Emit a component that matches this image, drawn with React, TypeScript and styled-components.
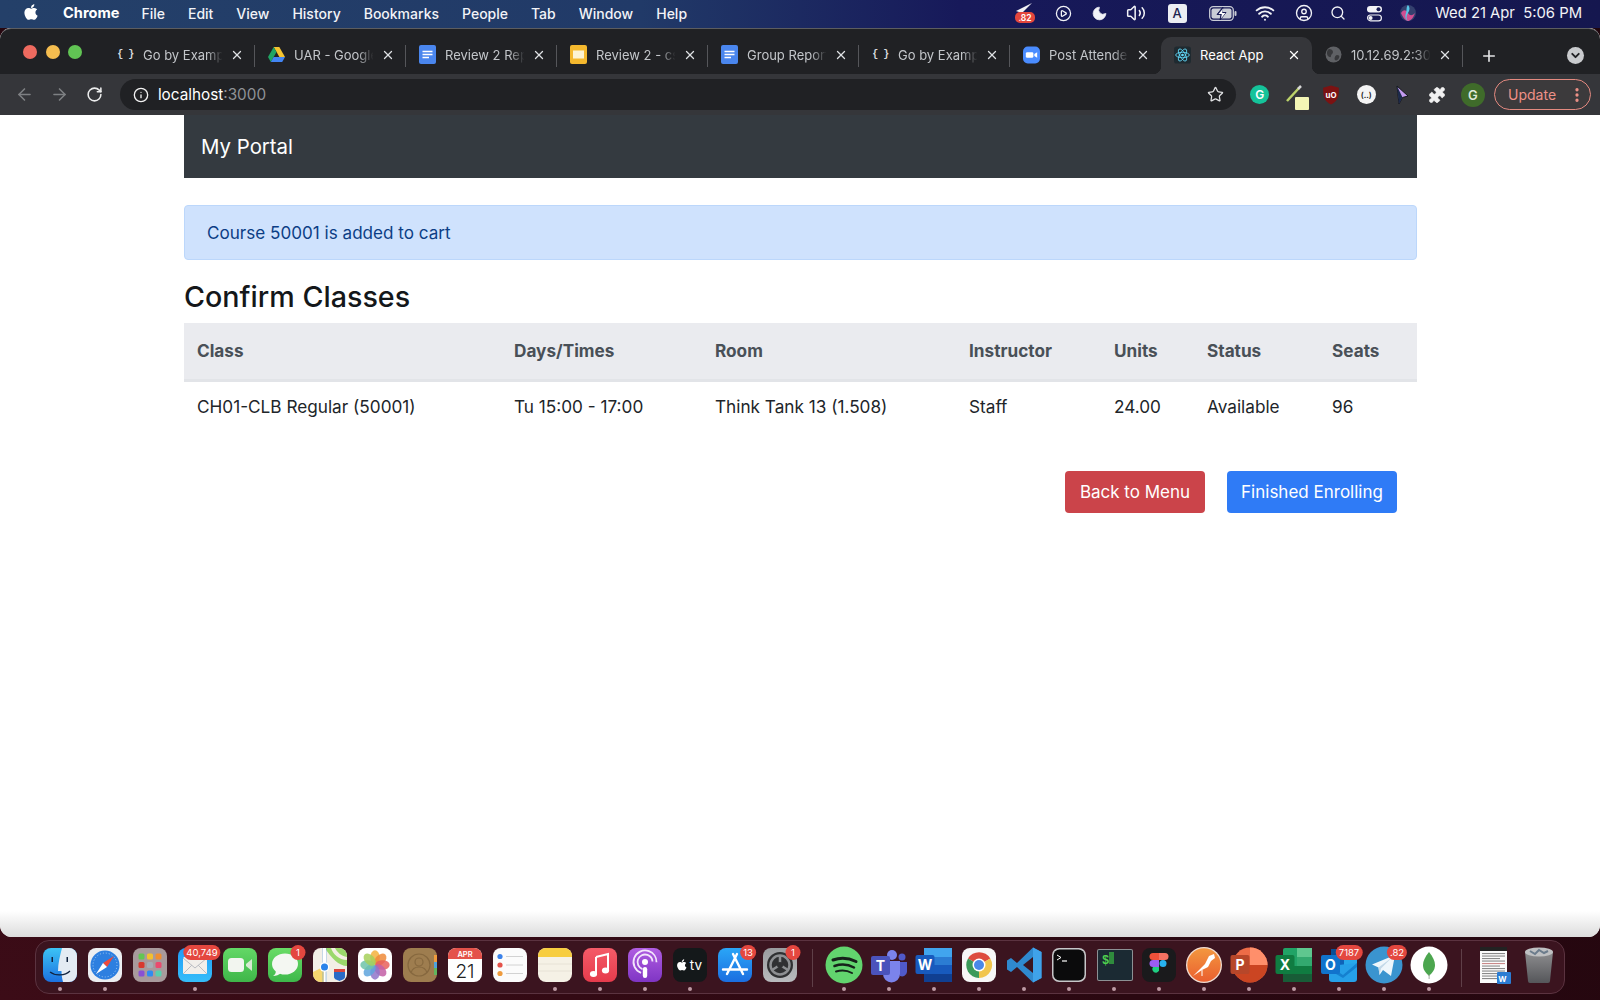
import React from "react";
import styled, { createGlobalStyle } from "styled-components";
import { FaApple } from "react-icons/fa";
import {
  ArrowLeft, ArrowRight, RotateCw, Info, Star, X, Plus, Puzzle, EllipsisVertical,
  CirclePlay, Moon, Volume2, Wifi, CircleUser, Search, ChevronDown,
} from "lucide-react";

const Global = createGlobalStyle`
  html, body { margin: 0; padding: 0; background: #2a0a12; }
  body { font-family: Inter, "Liberation Sans", sans-serif; }
  * { box-sizing: border-box; }
`;

const Desktop = styled.div`
  width: 1600px; height: 1000px; overflow: hidden; display: flex; flex-direction: column;
  background: radial-gradient(ellipse at 0% 100%, #3c0c17 0%, #2a0811 50%, #1f060d 100%);
`;

/* ---------- menu bar ---------- */
const MenuBar = styled.header`
  height: 28px; flex: none; display: flex; align-items: center; justify-content: space-between;
  padding: 0 18px 2px 22px; color: #f2f3f7; font-size: 14px; font-weight: 500;
  background: linear-gradient(90deg, #244069 0%, #213a68 40%, #17195a 60%, #15174f 100%);
`;
const MenuLeft = styled.nav`display: flex; align-items: center; gap: 23px;`;
const AppleSlot = styled.span`display: flex; width: 18px; font-size: 18px; color: #fff; margin-bottom: 3px;`;
const AppName = styled.span`font-weight: 700; color: #fff; margin-right: -1px; font-size: 14.6px;`;
const MenuItem = styled.span`white-space: nowrap;`;
const StatusRow = styled.div`display: flex; align-items: center;`;
const StatusSlot = styled.span<{ $w: number }>`
  width: ${(p) => p.$w}px; display: flex; justify-content: center; align-items: center; color: #f2f3f7;
`;
const Clock = styled.span`margin-left: 17px; white-space: pre; font-size: 14.8px; font-weight: 400;`;
const KeyBox = styled.span`
  width: 19px; height: 19px; background: #eceef3; color: #1c2450; border-radius: 3px;
  display: flex; align-items: center; justify-content: center; font-size: 13px; font-weight: 500;
`;

/* ---------- browser window ---------- */
const BrowserWindow = styled.main`
  height: 909px; flex: none; display: flex; flex-direction: column; overflow: hidden;
  border-radius: 11px 11px 12px 12px; background: #fff;
`;
const TabStrip = styled.div`
  height: 46px; flex: none; background: #202124; display: flex; align-items: flex-end; position: relative;
  border-top: 1px solid #5c5d60; border-radius: 11px 11px 0 0;
`;
const Lights = styled.div`
  width: 104px; height: 100%; flex: none; display: flex; gap: 8.5px; padding: 16px 0 0 23px;
`;
const Light = styled.span<{ $c: string }>`
  width: 14px; height: 14px; border-radius: 50%; background: ${(p) => p.$c};
`;
const Tab = styled.div<{ $active?: boolean; $sep?: boolean }>`
  width: 151px; height: 37px; flex: none; display: flex; align-items: center; position: relative;
  padding: 0 10px 2px 13px; font-size: 13px;
  color: ${(p) => (p.$active ? "#fff" : "#c3c6ca")};
  background: ${(p) => (p.$active ? "#35363a" : "transparent")};
  border-radius: 10px 10px 0 0;
  ${(p) =>
    p.$sep
      ? `&::after { content: ""; position: absolute; right: 0; top: 8px; height: 22px; width: 1px; background: #55565a; }`
      : ""}
  ${(p) =>
    p.$active
      ? `&::before { content: ""; position: absolute; left: -8px; bottom: 0; width: 8px; height: 8px; background: radial-gradient(circle at 0 0, transparent 8px, #35363a 8.5px); }
         &::after { content: ""; position: absolute; right: -8px; bottom: 0; width: 8px; height: 8px; background: radial-gradient(circle at 100% 0, transparent 8px, #35363a 8.5px); }`
      : ""}
`;
const FavSlot = styled.span`width: 17px; height: 17px; flex: none; display: flex; align-items: center; justify-content: center; margin-right: 9px;`;
const BraceIcon = styled.span`font-family: "Liberation Mono", monospace; font-size: 10px; font-weight: 700; color: #d8dadd; white-space: pre; letter-spacing: -0.5px;`;
const TabTitle = styled.span<{ $active?: boolean }>`
  flex: 1; min-width: 0; overflow: hidden; white-space: nowrap;
  ${(p) => (p.$active ? "" : `-webkit-mask-image: linear-gradient(90deg, #000 78%, transparent 97%); mask-image: linear-gradient(90deg, #000 78%, transparent 97%);`)}
`;
const TabClose = styled.span<{ $active?: boolean }>`
  display: flex; flex: none; width: 16px; justify-content: center; color: ${(p) => (p.$active ? "#fff" : "#dfe1e4")}; margin-left: 4px;
`;
const NewTab = styled.span`
  width: 52px; height: 37px; flex: none; display: flex; align-items: center; justify-content: center; color: #e2e3e5;
`;
const TabMenu = styled.span`
  position: absolute; right: 16px; bottom: 10px; width: 17px; height: 17px; border-radius: 50%;
  background: #c9cbce; display: flex; align-items: center; justify-content: center; color: #202124;
`;
const Toolbar = styled.div`
  height: 41px; flex: none; background: #35363a; display: flex; align-items: center; padding: 0 9px 0 15px;
`;
const NavButton = styled.span<{ $dim?: boolean }>`
  width: 35.5px; display: flex; justify-content: flex-start; color: ${(p) => (p.$dim ? "#7e8083" : "#eceded")};
`;
const Omnibox = styled.div`
  width: 1117px; height: 31px; margin-left: -1.5px; border-radius: 16px; background: #202124; display: flex; align-items: center;
  padding: 0 12px 0 13px; font-size: 15.3px; color: #fff;
`;
const InfoSlot = styled.span`display: flex; color: #f1f1f1; margin-right: 9px;`;
const Port = styled.span`color: #8f9296;`;
const OmniSpacer = styled.span`flex: 1;`;
const StarSlot = styled.span`display: flex; color: #dfe0e2;`;
const ExtRow = styled.div`display: flex; align-items: center; margin-left: 6px;`;
const ExtSlot = styled.span`width: 35.5px; height: 31px; display: flex; align-items: center; justify-content: center; color: #f1f1f1; position: relative;`;
const ExtCircle = styled.span<{ $bg: string; $fg: string; $size?: number; $font?: number }>`
  width: ${(p) => p.$size ?? 19}px; height: ${(p) => p.$size ?? 19}px; border-radius: 50%;
  background: ${(p) => p.$bg}; color: ${(p) => p.$fg};
  display: flex; align-items: center; justify-content: center; font-size: ${(p) => p.$font ?? 12}px; font-weight: 600;
`;
const Note = styled.span`
  position: absolute; left: 17px; bottom: 0; width: 14px; height: 13px; background: #f3f5b5; border-radius: 1px;
`;
const UpdatePill = styled.span`
  width: 97px; height: 31px; margin-left: 3.5px; border-radius: 16px; border: 1.5px solid #e48a80; background: #3c3a3c; color: #ee9187;
  display: flex; align-items: center; justify-content: space-between; padding: 0 4px 0 13px; font-size: 14px;
`;
const UpdateDots = styled.span`display: flex;`;

/* ---------- page ---------- */
const Page = styled.section`
  flex: 1; min-height: 0; background: linear-gradient(180deg, #fff 0, #fff calc(100% - 26px), #dcdcdc 100%);
  padding: 0 183px 0 184px;
`;
const Navbar = styled.div`
  height: 63px; background: #343a40; color: #fff; display: flex; align-items: center; padding-left: 17px; font-size: 20.4px;
`;
const Alert = styled.div`
  margin-top: 27px; height: 55px; background: #cfe2fd; border: 1px solid #bcd7fb; border-radius: 4px;
  display: flex; align-items: center; padding-left: 22px; color: #0c3e85; font-size: 17.1px;
`;
const Heading = styled.h2`
  margin: 17px 0 6px; font-size: 28.7px; line-height: 40px; font-weight: 500; color: #14171a;
`;
const ClassTable = styled.table`
  width: 1233px; table-layout: fixed; border-collapse: collapse; font-size: 17.2px; color: #212529;
`;
const Col = styled.col<{ $w: number }>`width: ${(p) => p.$w}px;`;
const HeadCell = styled.th`
  height: 57px; padding: 0 13px; text-align: left; font-weight: 700; color: #495057; background: #eaebef;
  border-bottom: 3px solid #e2e4e8;
`;
const BodyCell = styled.td`height: 56px; padding: 0 13px 4px;`;
const Actions = styled.div`
  margin-top: 35px; padding-right: 20px; display: flex; justify-content: flex-end; gap: 22px;
`;
const Btn = styled.button<{ $bg: string; $w: number }>`
  width: ${(p) => p.$w}px; height: 42px; border: 0; border-radius: 4px; background: ${(p) => p.$bg}; color: #fff;
  font: 400 17px Inter, "Liberation Sans", sans-serif; padding: 0;
`;

/* ---------- dock ---------- */
const DockArea = styled.footer`flex: 1; padding: 3px 35px 6px 35px;`;
const Dock = styled.nav`
  height: 54px; display: flex; padding: 0 2px 0 1.5px; border: 1px solid #5b3340; border-radius: 14px; background: #3b141f;
  align-items: flex-start;
`;
const DockItem = styled.div`
  width: 45px; height: 52px; flex: none; display: flex; flex-direction: column; align-items: center; padding-top: 5px; position: relative;
`;
const DockDot = styled.span<{ $on: boolean }>`
  width: 4px; height: 4px; border-radius: 50%; margin-top: 3px; background: ${(p) => (p.$on ? "#bd9aa4" : "transparent")};
`;
const DockSep = styled.span<{ $r: number }>`
  width: 1px; height: 38px; margin: 8px ${(p) => p.$r}px 0 9px; flex: none; background: #5f3f48;
`;
const Badge = styled.span<{ $dx: number }>`
  position: absolute; top: 4px; left: calc(50% + ${(p) => p.$dx}px); transform: translateX(-50%);
  min-width: 15px; height: 15px; padding: 0 3px; border-radius: 8px; background: #e4473f; color: #fff;
  font-size: 9.5px; line-height: 15px; text-align: center; white-space: nowrap;
`;

const Ic = ({ children }: { children: React.ReactNode }) => (
  <svg width="38" height="38" viewBox="0 0 38 38">{children}</svg>
);
const Grad = ({ id, a, b }: { id: string; a: string; b: string }) => (
  <defs>
    <linearGradient id={id} x1="0" y1="0" x2="0" y2="1">
      <stop offset="0" stopColor={a} />
      <stop offset="1" stopColor={b} />
    </linearGradient>
  </defs>
);
const Tile = ({ fill }: { fill: string }) => <rect x="2" y="2" width="34" height="34" rx="8" fill={fill} />;

const petals = ["#f3b23c", "#ef8b3a", "#e8605c", "#c35fa6", "#8f74c9", "#5fa5dd", "#6dc3a8", "#a6d05a"];

const icons: Record<string, React.ReactNode> = {
  finder: (
    <Ic>
      <Grad id="fa" a="#3cc3f5" b="#1c71e0" />
      <Tile fill="url(#fa)" />
      <path d="M21 2h7a8 8 0 0 1 8 8v18a8 8 0 0 1-8 8h-6c-1-4-1.500-7-1.500-11H17c0-8 2-15 4-23z" fill="#e4ebf3" />
      <path d="M9 26c5 4 15 4 20-1" stroke="#12233f" strokeWidth="1.200" fill="none" />
      <rect x="10.500" y="11" width="1.500" height="5" fill="#12233f" />
      <rect x="25.500" y="11" width="1.500" height="5" fill="#12233f" />
    </Ic>
  ),
  safari: (
    <Ic>
      <Tile fill="#eceef1" />
      <circle cx="19" cy="19" r="14.500" fill="#2d7fe0" />
      <circle cx="19" cy="19" r="12" fill="none" stroke="#a5cdf5" strokeWidth="1" strokeDasharray="1 2" />
      <path d="M28 10 17 17l4 4z" fill="#ee4a3d" />
      <path d="M10 28l7-11 4 4z" fill="#fff" />
    </Ic>
  ),
  launchpad: (
    <Ic>
      <Tile fill="#a89a9c" />
      {["#62c554", "#f3c02f", "#ef8e32", "#d8382e", "#a5adb5", "#ea4a6e", "#8950d4", "#2f8cf0", "#58cfae"].map((c, i) => (
        <rect key={i} x={7.5 + (i % 3) * 8.5} y={7.5 + Math.floor(i / 3) * 8.5} width="6" height="6" rx="1.500" fill={c} />
      ))}
    </Ic>
  ),
  mail: (
    <Ic>
      <Grad id="ma" a="#1f9bf8" b="#35bdf9" />
      <Tile fill="url(#ma)" />
      <rect x="7" y="11" width="24" height="17" rx="1.500" fill="#f1eeea" />
      <path d="M7 12l12 10 12-10M7 28l9-9M31 28l-9-9" stroke="#b9bcc2" strokeWidth="1" fill="none" />
    </Ic>
  ),
  facetime: (
    <Ic>
      <Grad id="fc" a="#63d866" b="#3fb649" />
      <Tile fill="url(#fc)" />
      <rect x="7" y="12" width="16" height="14" rx="3.500" fill="#f2f5ef" />
      <path d="M25 18l6-5v12l-6-5z" fill="#d7ead2" />
    </Ic>
  ),
  messages: (
    <Ic>
      <Grad id="ms" a="#69dc66" b="#3db84a" />
      <Tile fill="url(#ms)" />
      <ellipse cx="19" cy="18" rx="13" ry="10.500" fill="#f4f7f2" />
      <path d="M10 24c0 3-1 5-3 6 3 0 6-1 8-3z" fill="#f4f7f2" />
    </Ic>
  ),
  maps: (
    <Ic>
      <Tile fill="#f3efe6" />
      <path d="M14 2h14a8 8 0 0 1 8 8v10c-8 0-16-8-22-18z" fill="#9bd86b" />
      <path d="M20 2c2 6 8 12 16 12v-3c-6-1-10-5-12-9z" fill="#f4efe3" />
      <path d="M2 26l12-6v16h-4a8 8 0 0 1-8-8z" fill="#f6d66f" />
      <rect x="11" y="2" width="5" height="34" fill="#3f8fe8" opacity=".25" />
      <rect x="12" y="2" width="3" height="15" fill="#fff" />
      <circle cx="13.500" cy="21" r="4.800" fill="#fff" />
      <circle cx="13.500" cy="21" r="3.500" fill="#2b84ea" />
      <rect x="12.800" y="25" width="1.500" height="11" fill="#fff" />
      <path d="M23 24h11v7c0 2-3 3-5.500 4-2.500-1-5.500-2-5.500-4z" fill="#2a6bc7" />
      <rect x="23" y="23" width="11" height="3" fill="#d9473f" />
    </Ic>
  ),
  photos: (
    <Ic>
      <Tile fill="#fff" />
      {petals.map((c, i) => (
        <ellipse key={i} cx="19" cy="11.500" rx="4.800" ry="7.200" fill={c} opacity=".85" transform={`rotate(${i * 45} 19 19)`} />
      ))}
    </Ic>
  ),
  contacts: (
    <Ic>
      <Tile fill="#9e7d4f" />
      <rect x="33" y="9" width="3" height="7" fill="#ef9b3d" />
      <rect x="33" y="16" width="3" height="6" fill="#4ea3dd" />
      <rect x="33" y="22" width="3" height="7" fill="#62b65d" />
      <circle cx="18" cy="19" r="11" fill="none" stroke="#86683f" strokeWidth="1.200" />
      <circle cx="18" cy="16" r="4" fill="none" stroke="#86683f" strokeWidth="1.200" />
      <path d="M10 27c2-8 14-8 16 0" fill="none" stroke="#86683f" strokeWidth="1.200" />
    </Ic>
  ),
  calendar: (
    <Ic>
      <Tile fill="#fff" />
      <path d="M2 13v-3a8 8 0 0 1 8-8h18a8 8 0 0 1 8 8v3z" fill="#e4524a" />
      <text x="19" y="10.500" textAnchor="middle" fontSize="7.500" fontWeight="600" fill="#fff" fontFamily="Inter">APR</text>
      <text x="19" y="31.500" textAnchor="middle" fontSize="19" fontWeight="300" fill="#222" fontFamily="Inter">21</text>
    </Ic>
  ),
  reminders: (
    <Ic>
      <Tile fill="#fbfbfb" />
      <circle cx="9" cy="10.500" r="2.600" fill="#3b82ea" />
      <circle cx="9" cy="19" r="2.600" fill="#e4524a" />
      <circle cx="9" cy="27.500" r="2.600" fill="#ef9b3d" />
      <path d="M15 10.500h17M15 19h17M15 27.500h17" stroke="#d2d2d2" strokeWidth="1" />
    </Ic>
  ),
  notes: (
    <Ic>
      <Tile fill="#f5f1e6" />
      <path d="M2 11v-1a8 8 0 0 1 8-8h18a8 8 0 0 1 8 8v1z" fill="#f7cd3f" />
      <path d="M2 18h34M2 25h34" stroke="#e3dfd2" strokeWidth=".800" />
    </Ic>
  ),
  music: (
    <Ic>
      <Grad id="mu" a="#f45b68" b="#e63b4c" />
      <Tile fill="url(#mu)" />
      <path d="M15 11l12-3v16.500" fill="none" stroke="#fff" strokeWidth="2" />
      <path d="M15 11v17" stroke="#fff" strokeWidth="2" />
      <ellipse cx="12.500" cy="28" rx="3.600" ry="3" fill="#fff" />
      <ellipse cx="24.500" cy="24.500" rx="3.600" ry="3" fill="#fff" />
    </Ic>
  ),
  podcasts: (
    <Ic>
      <Grad id="po" a="#b05de2" b="#7f35c4" />
      <Tile fill="url(#po)" />
      <circle cx="19" cy="16" r="11.500" fill="none" stroke="#f3e5fb" strokeWidth="1.800" strokeDasharray="50 22" transform="rotate(110 19 16)" />
      <circle cx="19" cy="16" r="7.500" fill="none" stroke="#f3e5fb" strokeWidth="1.800" strokeDasharray="32 15" transform="rotate(110 19 16)" />
      <circle cx="19" cy="16" r="3" fill="#fff" />
      <rect x="16.800" y="21" width="4.400" height="11" rx="2.200" fill="#fff" />
    </Ic>
  ),
  tv: (
    <Ic>
      <Tile fill="#14181a" />
      <g transform="translate(6 12.500) scale(.025)" fill="#fff"><path d="M318.700 268.700c-.2-36.700 16.400-64.400 50-84.800-18.800-26.900-47.200-41.700-84.700-44.600-35.500-2.800-74.300 20.700-88.500 20.700-15 0-49.400-19.700-76.400-19.700C63.300 141.200 4 184.800 4 273.500q0 39.300 14.400 81.200c12.800 36.700 59 126.700 107.200 125.200 25.200-.6 43-17.900 75.800-17.900 31.800 0 48.300 17.900 76.400 17.900 48.600-.7 90.400-82.500 102.600-119.300-65.200-30.700-61.700-90-61.700-91.900zm-56.600-164.200c27.300-32.400 24.800-61.900 24-72.500-24.100 1.400-52 16.400-67.900 34.900-17.500 19.800-27.800 44.300-25.600 71.900 26.100 2 49.900-11.400 69.500-34.300z" /></g>
      <text x="25" y="24" textAnchor="middle" fontSize="13.500" fontWeight="400" fill="#fff" fontFamily="Inter">tv</text>
    </Ic>
  ),
  appstore: (
    <Ic>
      <Grad id="ap" a="#2aa6f7" b="#1b6ee0" />
      <Tile fill="url(#ap)" />
      <path d="M21 8 11 28M17 8l10 20M7 23.500h24" stroke="#fff" strokeWidth="2.400" strokeLinecap="round" />
    </Ic>
  ),
  settings: (
    <Ic>
      <Grad id="se" a="#9a9c9f" b="#b9bbbe" />
      <Tile fill="url(#se)" />
      <circle cx="19" cy="19" r="13" fill="#2f3032" />
      <circle cx="19" cy="19" r="9.500" fill="none" stroke="#8d8f92" strokeWidth="2.500" />
      <path d="M19 19V10M19 19l8 5M19 19l-8 5" stroke="#8d8f92" strokeWidth="2.500" />
      <circle cx="19" cy="19" r="3" fill="#2f3032" />
    </Ic>
  ),
  spotify: (
    <Ic>
      <circle cx="19" cy="19" r="18.500" fill="#62d46e" />
      <path d="M8 14c8-3 16-2 23 1.500" stroke="#16211a" strokeWidth="3" fill="none" strokeLinecap="round" />
      <path d="M9.500 20c7-2.300 14-1.500 19.500 1.500" stroke="#16211a" strokeWidth="2.500" fill="none" strokeLinecap="round" />
      <path d="M11 25.500c6-1.700 11.500-1 16 1.500" stroke="#16211a" strokeWidth="2" fill="none" strokeLinecap="round" />
    </Ic>
  ),
  teams: (
    <Ic>
      <circle cx="22" cy="9" r="5" fill="#7b83eb" />
      <circle cx="32" cy="11" r="3.500" fill="#5059c9" />
      <path d="M27 16h10v10a5 5 0 0 1-7 4z" fill="#5059c9" />
      <path d="M13 15h17v13a8.500 8.500 0 0 1-17 0z" fill="#7b83eb" />
      <rect x="1" y="10" width="19" height="19" rx="2" fill="#4b53bc" />
      <text x="10.500" y="25" textAnchor="middle" fontSize="14" fontWeight="700" fill="#fff" fontFamily="Inter">T</text>
    </Ic>
  ),
  word: (
    <Ic>
      <rect x="9" y="2" width="28" height="34" rx="2" fill="#2b7cd3" />
      <rect x="9" y="2" width="28" height="9" fill="#41a5ee" />
      <rect x="9" y="19" width="28" height="9" fill="#185abd" />
      <rect x="9" y="28" width="28" height="8" fill="#103f91" />
      <rect x="0.500" y="9" width="19" height="19" rx="2" fill="#185abd" />
      <text x="10" y="24" textAnchor="middle" fontSize="14" fontWeight="700" fill="#fff" fontFamily="Inter">W</text>
    </Ic>
  ),
  chrome: (
    <Ic>
      <Tile fill="#f7f7f7" />
      <path d="M19 19 8 12.500A13 13 0 0 1 30.300 12.500z" fill="#dd4b3e" />
      <path d="M19 19 8 12.500A13 13 0 0 0 19 32z" fill="#3c9a5a" />
      <path d="M19 19 30.300 12.500A13 13 0 0 1 19 32z" fill="#f1c54e" />
      <circle cx="19" cy="19" r="6.500" fill="#fff" />
      <circle cx="19" cy="19" r="5" fill="#4a88e8" />
    </Ic>
  ),
  vscode: (
    <Ic>
      <path d="M28 1.500 36.500 6v26L28 36.500 12 21l-6 5-4-2.500v-9L6 12l6 5z" fill="#2f89cf" />
      <path d="M28 1.500 36.500 6v26L28 36.500z" fill="#3fa2ea" />
      <path d="M28 11 18 19l10 8z" fill="#3b1520" />
    </Ic>
  ),
  terminal: (
    <Ic>
      <rect x="2" y="2" width="34" height="34" rx="7" fill="#c7c7c9" />
      <rect x="3.500" y="3.500" width="31" height="31" rx="6" fill="#0b0b0c" />
      <path d="M7 9l4 2.500L7 14" stroke="#fff" strokeWidth="1" fill="none" />
      <path d="M12 15h5" stroke="#fff" strokeWidth="1.200" />
    </Ic>
  ),
  iterm: (
    <Ic>
      <rect x="2" y="3" width="36" height="32" rx="2" fill="#8c9194" />
      <rect x="3" y="4" width="34" height="30" rx="1" fill="#1b2a33" />
      <text x="7" y="18" fontSize="12" fontWeight="700" fill="#4fd14f" fontFamily="Liberation Mono">$</text>
      <rect x="14" y="6" width="5" height="12" fill="#2f8b3d" />
    </Ic>
  ),
  figma: (
    <Ic>
      <Tile fill="#1a1a1c" />
      <path d="M13 7h6v7h-6a3.500 3.500 0 0 1 0-7z" fill="#f0513a" />
      <path d="M19 7h6a3.500 3.500 0 0 1 0 7h-6z" fill="#f57262" />
      <path d="M13 14h6v7h-6a3.500 3.500 0 0 1 0-7z" fill="#9c5cf4" />
      <circle cx="23" cy="17.500" r="3.500" fill="#27b3f0" />
      <path d="M13 21h6v3.500a3.500 3.500 0 1 1-6-3.500z" fill="#1fcf83" />
    </Ic>
  ),
  postman: (
    <Ic>
      <Grad id="pm" a="#f3973f" b="#ea5f2f" />
      <circle cx="19" cy="19" r="18" fill="#f1ddd2" />
      <circle cx="19" cy="19" r="16.700" fill="url(#pm)" />
      <path d="M8 30 20 18l4-8 5-2 1 4-4 3-3 6-6 3z" fill="#fff" />
      <path d="M17 24v6" stroke="#fff" strokeWidth="1" />
    </Ic>
  ),
  ppt: (
    <Ic>
      <circle cx="20" cy="19" r="17.500" fill="#ed6c47" />
      <path d="M20 1.500A17.500 17.500 0 0 1 37.500 19H20z" fill="#ff8f6b" />
      <path d="M2.500 19a17.500 17.500 0 0 0 35 0H20z" fill="#c43e1c" opacity=".85" />
      <rect x="0.500" y="9" width="19" height="19" rx="2" fill="#b7472a" />
      <text x="10" y="24" textAnchor="middle" fontSize="14" fontWeight="700" fill="#fff" fontFamily="Inter">P</text>
    </Ic>
  ),
  excel: (
    <Ic>
      <rect x="8" y="2" width="29" height="34" rx="2" fill="#21a366" />
      <rect x="22" y="2" width="15" height="9" fill="#5fc78f" />
      <rect x="22" y="11" width="15" height="9" fill="#33a96f" />
      <rect x="8" y="20" width="29" height="8" fill="#107c41" />
      <rect x="8" y="28" width="29" height="8" fill="#185c37" />
      <rect x="0.500" y="9" width="19" height="19" rx="2" fill="#107c41" />
      <text x="10" y="24" textAnchor="middle" fontSize="14" fontWeight="700" fill="#fff" fontFamily="Inter">X</text>
    </Ic>
  ),
  outlook: (
    <Ic>
      <rect x="11" y="3" width="26" height="18" fill="#0f63b8" />
      <rect x="11" y="3" width="13" height="9" fill="#0a4f96" />
      <rect x="24" y="12" width="13" height="9" fill="#28a8ea" />
      <path d="M9 20l28-3v16a3 3 0 0 1-3 3H12a3 3 0 0 1-3-3z" fill="#26a0e8" />
      <path d="M9 20l14 9 14-12v4L23 32 9 24z" fill="#1580cf" />
      <rect x="1" y="9" width="19" height="19" rx="2" fill="#1173cc" />
      <text x="10.500" y="24" textAnchor="middle" fontSize="14" fontWeight="700" fill="#fff" fontFamily="Inter">O</text>
    </Ic>
  ),
  telegram: (
    <Ic>
      <circle cx="19" cy="19" r="18.500" fill="#3a94cf" />
      <path d="M7 18.500 30 9l-4 21-8-6-3.500 5-1-7.500z" fill="#eef6fb" />
      <path d="M13.500 21.500 27 11.500 16 22.500l-1.500 6.500z" fill="#c3d9e8" />
    </Ic>
  ),
  mongo: (
    <Ic>
      <circle cx="19" cy="19" r="18.500" fill="#fff" />
      <path d="M19 6c4 5 6 9 6 13 0 5-3 8-6 11-3-3-6-6-6-11 0-4 2-8 6-13z" fill="#4ca64f" />
      <rect x="18.700" y="28" width=".800" height="5" fill="#8d9a8d" />
    </Ic>
  ),
  doc: (
    <Ic>
      <rect x="5" y="1" width="27" height="36" fill="#fbfbfb" />
      <rect x="5" y="1" width="27" height="4" fill="#222" />
      {Array.from({ length: 11 }).map((_, i) => (
        <rect key={i} x="7" y={7 + i * 2.5} width={i % 3 === 2 ? 18 : 23} height="1.100" fill={i === 4 ? "#c98a8a" : "#8a8a8a"} />
      ))}
      <rect x="22" y="26" width="14" height="12" rx="1" fill="#2b7cd3" />
      <text x="27.500" y="36" textAnchor="middle" fontSize="8" fontWeight="700" fill="#fff" fontFamily="Inter">W</text>
    </Ic>
  ),
  trash: (
    <Ic>
      <Grad id="tr" a="#8d8d8f" b="#55565a" />
      <path d="M5 6h28l-3 29a2 2 0 0 1-2 2H10a2 2 0 0 1-2-2z" fill="url(#tr)" />
      <ellipse cx="19" cy="6" rx="14" ry="4.500" fill="#bfc0c2" />
      <path d="M10 5l5 3 4-4 5 3 4-2" stroke="#6c7c8c" strokeWidth="2" fill="none" />
    </Ic>
  ),
};

const dockA: [string, boolean, string?, number?][] = [
  ["finder", true], ["safari", true], ["launchpad", false], ["mail", true, "40,749", 7], ["facetime", false],
  ["messages", false, "1", 13], ["maps", false], ["photos", false], ["contacts", false], ["calendar", false],
  ["reminders", false], ["notes", true], ["music", true], ["podcasts", true], ["tv", true],
  ["appstore", false, "13", 13], ["settings", false, "1", 13],
];
const dockB: [string, boolean, string?, number?][] = [
  ["spotify", true], ["teams", true], ["word", true], ["chrome", true], ["vscode", true], ["terminal", true],
  ["iterm", true], ["figma", true], ["postman", true], ["ppt", true], ["excel", true], ["outlook", true, "7187", 10],
  ["telegram", true, ".82", 13], ["mongo", true],
];
const dockC: [string, boolean, string?, number?][] = [["doc", false], ["trash", false]];

const renderDock = (items: [string, boolean, string?, number?][]) =>
  items.map(([name, on, badge, dx]) => (
    <DockItem key={name}>
      {icons[name]}
      <DockDot $on={on} />
      {badge ? <Badge $dx={dx ?? 0}>{badge}</Badge> : null}
    </DockItem>
  ));

const Doc = ({ c }: { c: string }) => (
  <svg width="17" height="19" viewBox="0 0 17 19">
    <rect width="17" height="19" rx="2" fill={c} />
    <path d="M3.500 6.500h10M3.500 9.500h10M3.500 12.500h6.500" stroke="#fff" strokeWidth="1.500" />
  </svg>
);
const Slides = () => (
  <svg width="17" height="19" viewBox="0 0 17 19">
    <rect width="17" height="19" rx="2" fill="#f4b82e" />
    <rect x="3" y="5.500" width="11" height="8" fill="#fdf3d3" />
  </svg>
);
const Drive = () => (
  <svg width="17" height="15" viewBox="0 0 17 15">
    <path d="M5.700 0h5.600l5.700 10h-5.600z" fill="#f4c430" />
    <path d="M5.700 0 0 10l2.800 5 5.700-10z" fill="#1fa463" />
    <path d="M5.600 10H17l-2.800 5H2.800z" fill="#4285f4" />
  </svg>
);
const Zoom = () => (
  <svg width="18" height="18" viewBox="0 0 18 18">
    <rect width="18" height="18" rx="5" fill="#4a8cff" />
    <rect x="3" y="6" width="8" height="6" rx="1.500" fill="#fff" />
    <path d="M12 8l3-2v6l-3-2z" fill="#fff" />
  </svg>
);
const Atom = () => (
  <svg width="20" height="20" viewBox="0 0 20 20">
    <rect width="20" height="20" rx="3" fill="#1f2a30" />
    <g fill="none" stroke="#61dafb" strokeWidth="1">
      <ellipse cx="10" cy="10" rx="8" ry="3.200" />
      <ellipse cx="10" cy="10" rx="8" ry="3.200" transform="rotate(60 10 10)" />
      <ellipse cx="10" cy="10" rx="8" ry="3.200" transform="rotate(120 10 10)" />
    </g>
    <circle cx="10" cy="10" r="1.600" fill="#61dafb" />
  </svg>
);
const Globe = () => (
  <svg width="17" height="17" viewBox="0 0 17 17">
    <circle cx="8.500" cy="8.500" r="8" fill="#5f6165" />
    <path d="M4 3c2 0 4 1 4 3S6 8 6 10s-2 1-3 0-2-5 1-7zM12 9c2 0 3 1 2 3s-3 3-4 2 0-5 2-5z" fill="#37383b" />
  </svg>
);
const Braces = () => <BraceIcon>{"{ }"}</BraceIcon>;

const tabs: { icon: React.ReactNode; title: string; active?: boolean; sep?: boolean }[] = [
  { icon: <Braces />, title: "Go by Example: Structs", sep: true },
  { icon: <Drive />, title: "UAR - Google Drive", sep: true },
  { icon: <Doc c="#4a86ee" />, title: "Review 2 Report", sep: true },
  { icon: <Slides />, title: "Review 2 - cs3219", sep: true },
  { icon: <Doc c="#4a86ee" />, title: "Group Report", sep: true },
  { icon: <Braces />, title: "Go by Example: Maps", sep: true },
  { icon: <Zoom />, title: "Post Attendee" },
  { icon: <Atom />, title: "React App", active: true },
  { icon: <Globe />, title: "10.12.69.2:3000", sep: true },
];

const menu = ["File", "Edit", "View", "History", "Bookmarks", "People", "Tab", "Window", "Help"];
const columns: [string, number][] = [
  ["Class", 317], ["Days/Times", 201], ["Room", 254], ["Instructor", 145], ["Units", 93], ["Status", 125], ["Seats", 98],
];
const row = ["CH01-CLB Regular (50001)", "Tu 15:00 - 17:00", "Think Tank 13 (1.508)", "Staff", "24.00", "Available", "96"];

export default function App() {
  return (
    <Desktop>
      <Global />
      <MenuBar>
        <MenuLeft>
          <AppleSlot><FaApple /></AppleSlot>
          <AppName>Chrome</AppName>
          {menu.map((m) => <MenuItem key={m}>{m}</MenuItem>)}
        </MenuLeft>
        <StatusRow>
          <StatusSlot $w={38}>
            <svg width="24" height="22" viewBox="0 0 24 22">
              <path d="M19 1 3 9l6 2z" fill="#f1f2f5" />
              <rect x="2" y="10" width="20" height="11" rx="5" fill="#e3463c" />
              <text x="12" y="18.500" textAnchor="middle" fontSize="8.500" fontWeight="600" fill="#fff" fontFamily="Inter">.82</text>
            </svg>
          </StatusSlot>
          <StatusSlot $w={38}><CirclePlay size={17} strokeWidth={1.800} /></StatusSlot>
          <StatusSlot $w={34}><Moon size={17} fill="#f2f3f7" strokeWidth={1} /></StatusSlot>
          <StatusSlot $w={40}><Volume2 size={20} strokeWidth={1.800} /></StatusSlot>
          <StatusSlot $w={42}><KeyBox>A</KeyBox></StatusSlot>
          <StatusSlot $w={50}>
            <svg width="28" height="15" viewBox="0 0 28 15">
              <rect x=".700" y=".700" width="23.600" height="13.600" rx="3.500" fill="none" stroke="#c9ccd6" strokeWidth="1.300" />
              <rect x="2.500" y="2.500" width="20" height="10" rx="2" fill="#c9ccd6" />
              <rect x="25.500" y="5" width="2" height="5" rx="1" fill="#c9ccd6" />
              <path d="M14 1 8 8.500h4L11 14l6-7.500h-4z" fill="#171a55" stroke="#171a55" strokeWidth="1" />
              <path d="M14 2.500 9.500 8h3.300L12 12.500 16.500 7h-3.300z" fill="#fff" />
            </svg>
          </StatusSlot>
          <StatusSlot $w={34}><Wifi size={20} strokeWidth={2.300} /></StatusSlot>
          <StatusSlot $w={44}><CircleUser size={18} strokeWidth={1.800} /></StatusSlot>
          <StatusSlot $w={24}><Search size={16} strokeWidth={2} /></StatusSlot>
          <StatusSlot $w={48}>
            <svg width="17" height="17" viewBox="0 0 17 17">
              <rect x="1" y="1" width="15" height="6.500" rx="3.200" fill="#f2f3f7" />
              <circle cx="12.500" cy="4.200" r="2" fill="#171a55" />
              <rect x="1.600" y="10" width="13.800" height="5.800" rx="2.900" fill="none" stroke="#f2f3f7" strokeWidth="1.200" />
              <circle cx="4.600" cy="12.900" r="2" fill="#f2f3f7" />
            </svg>
          </StatusSlot>
          <StatusSlot $w={20}>
            <svg width="18" height="18" viewBox="0 0 18 18">
              <circle cx="9" cy="9" r="8" fill="#34406e" />
              <path d="M2 9c3-4 5-3 7 0s4 3 7 0c-2 6-5 8-7 8s-5-3-7-8z" fill="#d04f92" />
              <path d="M9 1c2 2 2 5 0 8s-2 6 0 8c-3-2-3-5-2-8s0-6 2-8z" fill="#57c7e8" />
            </svg>
          </StatusSlot>
          <Clock>Wed 21 Apr  5:06 PM</Clock>
        </StatusRow>
      </MenuBar>

      <BrowserWindow>
        <TabStrip>
          <Lights>
            <Light $c="#ee6a5f" />
            <Light $c="#f5bd4f" />
            <Light $c="#61c454" />
          </Lights>
          {tabs.map((t) => (
            <Tab key={t.title} $active={t.active} $sep={t.sep}>
              <FavSlot>{t.icon}</FavSlot>
              <TabTitle $active={t.active}>{t.title}</TabTitle>
              <TabClose $active={t.active}><X size={14} strokeWidth={2.200} /></TabClose>
            </Tab>
          ))}
          <NewTab><Plus size={18} strokeWidth={2.200} /></NewTab>
          <TabMenu><ChevronDown size={13} strokeWidth={3.500} /></TabMenu>
        </TabStrip>

        <Toolbar>
          <NavButton $dim><ArrowLeft size={19} strokeWidth={2} /></NavButton>
          <NavButton $dim><ArrowRight size={19} strokeWidth={2} /></NavButton>
          <NavButton><RotateCw size={17} strokeWidth={2.200} /></NavButton>
          <Omnibox>
            <InfoSlot><Info size={16} strokeWidth={2} /></InfoSlot>
            localhost<Port>:3000</Port>
            <OmniSpacer />
            <StarSlot><Star size={17} strokeWidth={1.800} /></StarSlot>
          </Omnibox>
          <ExtRow>
            <ExtSlot><ExtCircle $bg="#15c39a" $fg="#fff">G</ExtCircle></ExtSlot>
            <ExtSlot>
              <svg width="20" height="20" viewBox="0 0 20 20">
                <path d="M2 16 14 3" stroke="#bcd36a" strokeWidth="2.500" />
                <path d="M13 4 16 1" stroke="#d8d8d8" strokeWidth="2.500" />
              </svg>
              <Note />
            </ExtSlot>
            <ExtSlot>
              <svg width="18" height="22" viewBox="0 0 16 19">
                <path d="M8 1 15 3c0 8-1 12-7 15C2 15 1 11 1 3z" fill="#7c1212" />
                <text x="8" y="12" textAnchor="middle" fontSize="7" fontWeight="700" fill="#fff" fontFamily="Inter">uO</text>
              </svg>
            </ExtSlot>
            <ExtSlot><ExtCircle $bg="#f4f4f4" $fg="#222" $font={8}>(..)</ExtCircle></ExtSlot>
            <ExtSlot>
              <svg width="14" height="20" viewBox="0 0 14 20">
                <path d="M2 1 4 19l3.500-6.500L13 11z" fill="#c39af0" stroke="#14161a" strokeWidth="1" />
                <path d="M2 1 4 19l3.500-6.500z" fill="#1c2a4a" />
              </svg>
            </ExtSlot>
            <ExtSlot><Puzzle size={18} fill="#f1f1f1" strokeWidth={1} /></ExtSlot>
            <ExtSlot><ExtCircle $bg="#3f6b2a" $fg="#dfe8d8" $size={24} $font={13}>G</ExtCircle></ExtSlot>
          </ExtRow>
          <UpdatePill>
            Update
            <UpdateDots><EllipsisVertical size={18} strokeWidth={2.400} /></UpdateDots>
          </UpdatePill>
        </Toolbar>

        <Page>
          <Navbar>My Portal</Navbar>
          <Alert>Course 50001 is added to cart</Alert>
          <Heading>Confirm Classes</Heading>
          <ClassTable>
            <colgroup>
              {columns.map(([c, w]) => <Col key={c} $w={w} />)}
            </colgroup>
            <thead>
              <tr>{columns.map(([c]) => <HeadCell key={c}>{c}</HeadCell>)}</tr>
            </thead>
            <tbody>
              <tr>{row.map((c) => <BodyCell key={c}>{c}</BodyCell>)}</tr>
            </tbody>
          </ClassTable>
          <Actions>
            <Btn $bg="#cb444a" $w={140}>Back to Menu</Btn>
            <Btn $bg="#2f7bf6" $w={170}>Finished Enrolling</Btn>
          </Actions>
        </Page>
      </BrowserWindow>

      <DockArea>
        <Dock>
          {renderDock(dockA)}
          <DockSep $r={9} />
          {renderDock(dockB)}
          <DockSep $r={10} />
          {renderDock(dockC)}
        </Dock>
      </DockArea>
    </Desktop>
  );
}
